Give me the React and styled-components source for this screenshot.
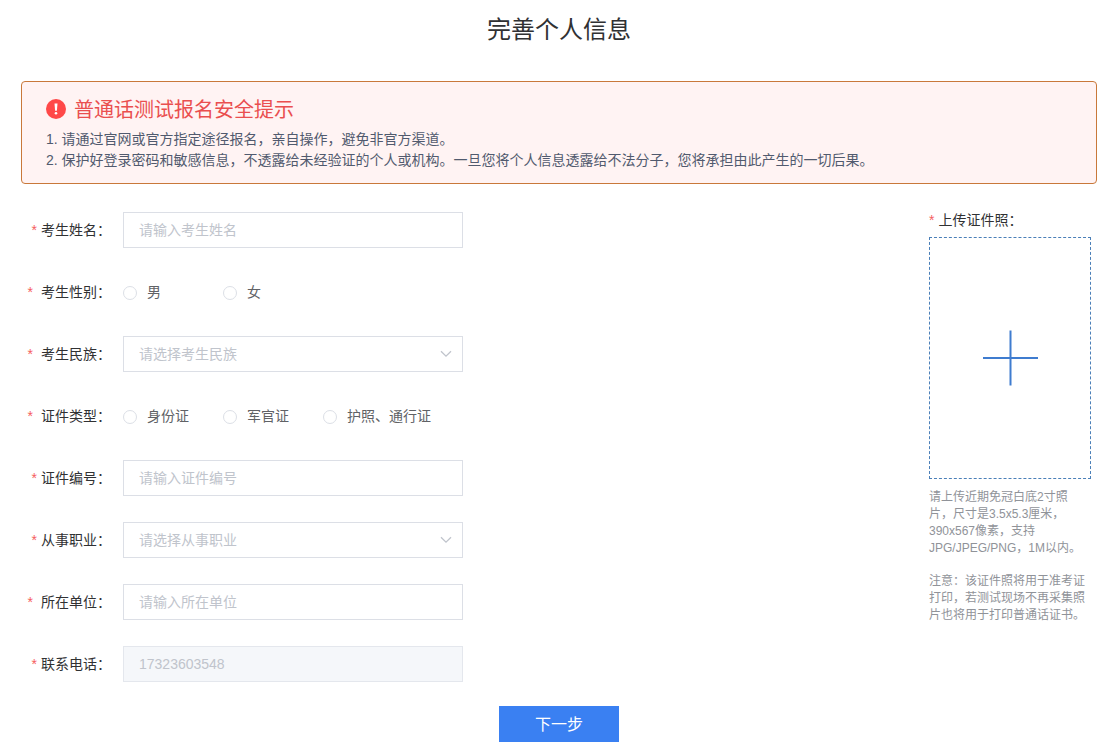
import React from "react";
import styled, { createGlobalStyle } from "styled-components";

const GlobalStyle = createGlobalStyle`
  *, *::before, *::after { box-sizing: border-box; }
  body {
    margin: 0;
    background: #fff;
    color: #303133;
    font-family: "Liberation Sans", "Noto Sans CJK SC", sans-serif;
    font-size: 14px;
  }
  input, select, button { font: inherit; }
`;

const Page = styled.main`
  padding: 0 21px 11px;
`;

const Title = styled.h1`
  margin: 0 0 21px;
  font-size: 24px;
  font-weight: 400;
  line-height: 60px;
  text-align: center;
`;

const Notice = styled.section`
  padding: 13px 24px 12px;
  border: 1px solid #c9783a;
  border-radius: 4px;
  background: #fff3f3;
  color: #515a6e;
`;

const NoticeTitle = styled.h2`
  display: flex;
  align-items: center;
  gap: 8px;
  margin: 0 0 4px;
  color: #ea4f4f;
  font-size: 20px;
  font-weight: 400;
  line-height: 30px;
`;

const NoticeIcon = styled.svg`
  flex: none;
  margin-bottom: 2px;
`;

const NoticeLine = styled.p`
  margin: 0;
  line-height: 21px;
`;

const Form = styled.form`
  display: flex;
  flex-direction: column;
  align-items: center;
  gap: 24px;
  margin-top: 28px;
`;

const Columns = styled.div`
  display: flex;
  justify-content: space-between;
  align-self: stretch;
  padding-right: 6px;
`;

const Fields = styled.div`
  display: flex;
  flex-direction: column;
  gap: 26px;
`;

const Row = styled.div`
  display: grid;
  grid-template-columns: 90px auto;
  column-gap: 12px;
  align-items: center;
  height: 36px;
`;

const Caption = styled.label`
  display: flex;
  justify-content: flex-end;
  line-height: 36px;
  white-space: nowrap;
`;

const Star = styled.span`
  margin-right: ${(p) => (p.$wide ? 8 : 4)}px;
  color: #f56060;
`;

const TextBox = styled.input`
  width: 340px;
  height: 36px;
  padding: 0 15px;
  border: 1px solid #dcdfe6;
  border-radius: 0;
  outline: none;
  background: #fff;
  color: #606266;
  &::placeholder { color: #c0c4cc; opacity: 1; }
  &:disabled { background: #f5f7fa; border-color: #e4e7ed; color: #c0c4cc; }
`;

const SelectWrap = styled.div`
  display: grid;
  align-items: center;
  width: 340px;
  & > * { grid-area: 1 / 1; }
`;

const SelectBox = styled.select`
  width: 100%;
  height: 36px;
  padding: 0 36px 0 15px;
  border: 1px solid #dcdfe6;
  border-radius: 0;
  appearance: none;
  background: #fff;
  color: #c0c4cc;
`;

const Chevron = styled.svg`
  justify-self: end;
  margin-right: 11px;
  pointer-events: none;
`;

const Choices = styled.div`
  display: flex;
`;

const Choice = styled.label`
  display: flex;
  align-items: center;
  gap: 10px;
  min-width: 100px;
  color: #606266;
  line-height: 36px;
`;

const Radio = styled.input`
  appearance: none;
  width: 14px;
  height: 14px;
  margin: 2px 0 0;
  border: 1px solid #dcdfe6;
  border-radius: 50%;
  background: #fff;
  &:checked { border: 4px solid #3a80f2; }
`;

const Upload = styled.div`
  width: 162px;
`;

const UploadCaption = styled.div`
  margin-bottom: 8px;
  line-height: 17px;
`;

const UploadButton = styled.button`
  display: flex;
  align-items: center;
  justify-content: center;
  width: 100%;
  height: 242px;
  padding: 0;
  border: 1px dashed #4a7fb8;
  background: #fff;
`;

const Hint = styled.p`
  margin: ${(p) => (p.$first ? 10 : 16)}px 0 0;
  color: #909399;
  font-size: 12px;
  line-height: 17px;
`;

const Submit = styled.button`
  width: 120px;
  height: 36px;
  padding: 0 0 2px;
  border: 0;
  background: #3a80f2;
  color: #fff;
  font-size: 16px;
`;

function Field({ id, label, wide, group, children }) {
  return (
    <Row role={group ? "radiogroup" : undefined} aria-labelledby={group ? `${id}-label` : undefined}>
      <Caption as={group ? "span" : "label"} id={`${id}-label`} htmlFor={group ? undefined : id}>
        <Star $wide={wide}>*</Star>
        {label}：
      </Caption>
      {children}
    </Row>
  );
}

function Dropdown({ id, placeholder }) {
  return (
    <SelectWrap>
      <SelectBox id={id} defaultValue="">
        <option value="">{placeholder}</option>
      </SelectBox>
      <Chevron width="12" height="8" viewBox="0 0 12 8" fill="none" stroke="#c0c4cc" strokeWidth="1.3" aria-hidden="true">
        <path d="M1 1.2 6 6.2 11 1.2" />
      </Chevron>
    </SelectWrap>
  );
}

function RadioChoices({ name, options }) {
  return (
    <Choices>
      {options.map((option) => (
        <Choice key={option}>
          <Radio type="radio" name={name} value={option} />
          {option}
        </Choice>
      ))}
    </Choices>
  );
}

export default function App() {
  return (
    <Page lang="zh-CN">
      <GlobalStyle />
      <Title>完善个人信息</Title>
      <Notice>
        <NoticeTitle>
          <NoticeIcon width="20" height="20" viewBox="0 0 20 20" aria-hidden="true">
            <circle cx="10" cy="10" r="10" fill="#ff4848" />
            <path d="M8.5 4.4h3l-.6 7.4H9.1z" fill="#fff" />
            <circle cx="10" cy="14.2" r="1.3" fill="#fff" />
          </NoticeIcon>
          普通话测试报名安全提示
        </NoticeTitle>
        <NoticeLine>1. 请通过官网或官方指定途径报名，亲自操作，避免非官方渠道。</NoticeLine>
        <NoticeLine>2. 保护好登录密码和敏感信息，不透露给未经验证的个人或机构。一旦您将个人信息透露给不法分子，您将承担由此产生的一切后果。</NoticeLine>
      </Notice>
      <Form onSubmit={(event) => event.preventDefault()}>
        <Columns>
          <Fields>
            <Field id="name" label="考生姓名">
              <TextBox id="name" placeholder="请输入考生姓名" />
            </Field>
            <Field id="gender" label="考生性别" wide group>
              <RadioChoices name="gender" options={["男", "女"]} />
            </Field>
            <Field id="nation" label="考生民族" wide>
              <Dropdown id="nation" placeholder="请选择考生民族" />
            </Field>
            <Field id="idType" label="证件类型" wide group>
              <RadioChoices name="idType" options={["身份证", "军官证", "护照、通行证"]} />
            </Field>
            <Field id="idNumber" label="证件编号">
              <TextBox id="idNumber" placeholder="请输入证件编号" />
            </Field>
            <Field id="job" label="从事职业">
              <Dropdown id="job" placeholder="请选择从事职业" />
            </Field>
            <Field id="company" label="所在单位" wide>
              <TextBox id="company" placeholder="请输入所在单位" />
            </Field>
            <Field id="phone" label="联系电话">
              <TextBox id="phone" type="tel" defaultValue="17323603548" disabled />
            </Field>
          </Fields>
          <Upload>
            <UploadCaption id="photo-label">
              <Star>*</Star>上传证件照：
            </UploadCaption>
            <UploadButton type="button" aria-labelledby="photo-label">
              <svg width="56" height="56" viewBox="0 0 56 56" fill="none" stroke="#3f7ccf" strokeWidth="2" aria-hidden="true">
                <path d="M1 28H56M28.5 .5V55.5" />
              </svg>
            </UploadButton>
            <Hint $first>请上传近期免冠白底2寸照片，尺寸是3.5x5.3厘米，390x567像素，支持JPG/JPEG/PNG，1M以内。</Hint>
            <Hint>注意：该证件照将用于准考证打印，若测试现场不再采集照片也将用于打印普通话证书。</Hint>
          </Upload>
        </Columns>
        <Submit type="submit">下一步</Submit>
      </Form>
    </Page>
  );
}
